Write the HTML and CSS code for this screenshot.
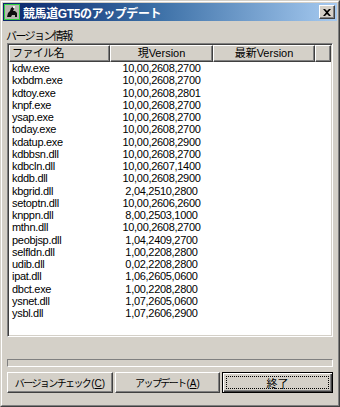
FILE: index.html
```html
<!doctype html>
<html>
  <head>
    <meta charset="utf-8">
    <title>競馬道GT5のアップデート</title>
    <link rel="stylesheet" href="styles.css">
  </head>
  <body>
    <div class="window">
      <div class="frame">

        <!-- title bar -->
        <div class="titlebar">
          <svg class="app-icon" width="16" height="16" viewBox="0 0 16 16">
            <rect x="0.5" y="0.5" width="15" height="15" fill="#b8b8b0" stroke="#30d040"/>
            <path d="M3 13 L4 9 L6 7 L7 4 L9 3 L10 5 L9 7 L11 7 L13 9 L13 13 L11 13 L11 11 L8 11 L7 13 Z" fill="#101010"/>
            <path d="M9 2 L11 2 L11 4 L9 4 Z" fill="#f0f0f0"/>
          </svg>
          <span class="title">競馬道GT5のアップデート</span>
          <button class="close-btn">
            <svg width="8" height="7" viewBox="0 0 8 7">
              <path d="M0 0 H2 L4 2 L6 0 H8 L5 3.5 L8 7 H6 L4 5 L2 7 H0 L3 3.5 Z" fill="#000"/>
            </svg>
          </button>
        </div>

        <div class="client">
          <div class="label">バージョン情報</div>

          <!-- version list -->
          <div class="listview">
            <div class="list-header">
              <div class="hcell hcell-left">ファイル名</div>
              <div class="hcell">現Version</div>
              <div class="hcell">最新Version</div>
              <div class="hcell hcell-fill"></div>
            </div>
            <div class="rows">
              <div class="row"><span>kdw.exe</span><span class="ver">10,00,2608,2700</span><span></span></div>
              <div class="row"><span>kxbdm.exe</span><span class="ver">10,00,2608,2700</span><span></span></div>
              <div class="row"><span>kdtoy.exe</span><span class="ver">10,00,2608,2801</span><span></span></div>
              <div class="row"><span>knpf.exe</span><span class="ver">10,00,2608,2700</span><span></span></div>
              <div class="row"><span>ysap.exe</span><span class="ver">10,00,2608,2700</span><span></span></div>
              <div class="row"><span>today.exe</span><span class="ver">10,00,2608,2700</span><span></span></div>
              <div class="row"><span>kdatup.exe</span><span class="ver">10,00,2608,2900</span><span></span></div>
              <div class="row"><span>kdbbsn.dll</span><span class="ver">10,00,2608,2700</span><span></span></div>
              <div class="row"><span>kdbcln.dll</span><span class="ver">10,00,2607,1400</span><span></span></div>
              <div class="row"><span>kddb.dll</span><span class="ver">10,00,2608,2900</span><span></span></div>
              <div class="row"><span>kbgrid.dll</span><span class="ver">2,04,2510,2800</span><span></span></div>
              <div class="row"><span>setoptn.dll</span><span class="ver">10,00,2606,2600</span><span></span></div>
              <div class="row"><span>knppn.dll</span><span class="ver">8,00,2503,1000</span><span></span></div>
              <div class="row"><span>mthn.dll</span><span class="ver">10,00,2608,2700</span><span></span></div>
              <div class="row"><span>peobjsp.dll</span><span class="ver">1,04,2409,2700</span><span></span></div>
              <div class="row"><span>selfldn.dll</span><span class="ver">1,00,2208,2800</span><span></span></div>
              <div class="row"><span>udib.dll</span><span class="ver">0,02,2208,2800</span><span></span></div>
              <div class="row"><span>ipat.dll</span><span class="ver">1,06,2605,0600</span><span></span></div>
              <div class="row"><span>dbct.exe</span><span class="ver">1,00,2208,2800</span><span></span></div>
              <div class="row"><span>ysnet.dll</span><span class="ver">1,07,2605,0600</span><span></span></div>
              <div class="row"><span>ysbl.dll</span><span class="ver">1,07,2606,2900</span><span></span></div>
            </div>
          </div>

          <div class="progress"></div>

          <div class="buttons">
            <button class="btn btn-check">バージョンチェック<span class="key">(<u>C</u>)</span></button>
            <button class="btn btn-update">アップデート<span class="key">(<u>A</u>)</span></button>
            <button class="btn btn-default"><span class="focus">終了</span></button>
          </div>
        </div>

      </div>
    </div>
  </body>
</html>
```

FILE: styles.css
```css
body {
  margin: 0px;
  background-color: #d4d0c8;
  font-family: "Liberation Sans", "Noto Sans CJK JP", sans-serif;
  font-size: 11px;
  color: black;
}

.window {
  width: 340px;
  height: 407px;
  box-sizing: border-box;
  border: 1px solid;
  border-color: #d4d0c8 #404040 #404040 #d4d0c8;
  display: flex;
}
.frame {
  flex: 1;
  border: 1px solid;
  border-color: #ffffff #808080 #808080 #ffffff;
  padding: 1px;
  display: flex;
  flex-direction: column;
}

/* title bar */
.titlebar {
  height: 18px;
  display: flex;
  align-items: center;
  background: linear-gradient(to right, #0a246a, #3a6ea5 45%, #a6caf0);
  padding: 0px 2px 0px 0px;
}
.app-icon {
  margin: 0px 3px 0px 1px;
  flex: none;
}
.title {
  flex: 1;
  color: white;
  font-weight: bold;
  font-size: 12px;
  letter-spacing: -0.4px;
}
.close-btn {
  width: 16px;
  height: 14px;
  padding: 0px;
  margin: 0px;
  background: #d4d0c8;
  border: 1px solid;
  border-color: #ffffff #404040 #404040 #ffffff;
  box-shadow: inset -1px -1px #808080;
  display: flex;
  align-items: center;
  justify-content: center;
}

/* window body */
.client {
  flex: 1;
  display: flex;
  flex-direction: column;
  padding: 8px 4px 0px 4px;
}
.label {
  height: 14px;
  line-height: 14px;
  margin-left: -1px;
  letter-spacing: -1.6px;
}

.listview {
  height: 294px;
  box-sizing: border-box;
  border: 1px solid;
  border-color: #808080 #ffffff #ffffff #808080;
  box-shadow: inset 1px 1px #404040, inset -1px -1px #d4d0c8;
  padding: 1px;
  background: white;
  display: flex;
  flex-direction: column;
  overflow: hidden;
}
.list-header {
  display: grid;
  grid-template-columns: 101px 103px 102px 1fr;
  height: 17px;
  flex: none;
}
.hcell {
  background: #d4d0c8;
  border: 1px solid;
  border-color: #ffffff #404040 #404040 #ffffff;
  box-shadow: inset -1px -1px #808080;
  text-align: center;
  line-height: 14px;
  white-space: nowrap;
}
.hcell-left {
  text-align: left;
  padding-left: 2px;
  letter-spacing: -0.6px;
}

.row {
  display: grid;
  grid-template-columns: 101px 103px 102px;
  height: 12.25px;
  line-height: 12px;
  letter-spacing: -0.3px;
  white-space: nowrap;
}
.row span:first-child {
  padding-left: 3px;
}
.ver {
  text-align: center;
}

.progress {
  height: 8px;
  box-sizing: border-box;
  margin-top: 22px;
  border: 1px solid;
  border-color: #808080 #ffffff #ffffff #808080;
}

.buttons {
  display: flex;
  gap: 2px;
  margin-top: 5px;
}
.btn {
  height: 21px;
  box-sizing: border-box;
  padding: 0px;
  margin: 0px;
  background: #d4d0c8;
  border: 1px solid;
  border-color: #ffffff #404040 #404040 #ffffff;
  box-shadow: inset -1px -1px #808080;
  font-family: "Liberation Sans", "Noto Sans CJK JP", sans-serif;
  font-size: 10px;
  letter-spacing: -1.6px;
  color: black;
}
.key {
  letter-spacing: 0px;
  margin-left: 1px;
}
.btn-check {
  width: 106px;
}
.btn-update {
  width: 105px;
}
.btn-default {
  width: 111px;
  border: 1px solid #000000;
  box-shadow: inset 1px 1px #ffffff, inset -1px -1px #404040, inset -2px -2px #808080;
  padding: 3px;
  display: flex;
  font-size: 11px;
  letter-spacing: 0px;
}
.focus {
  flex: 1;
  border: 1px dotted #000000;
  display: flex;
  align-items: center;
  justify-content: center;
}
```
